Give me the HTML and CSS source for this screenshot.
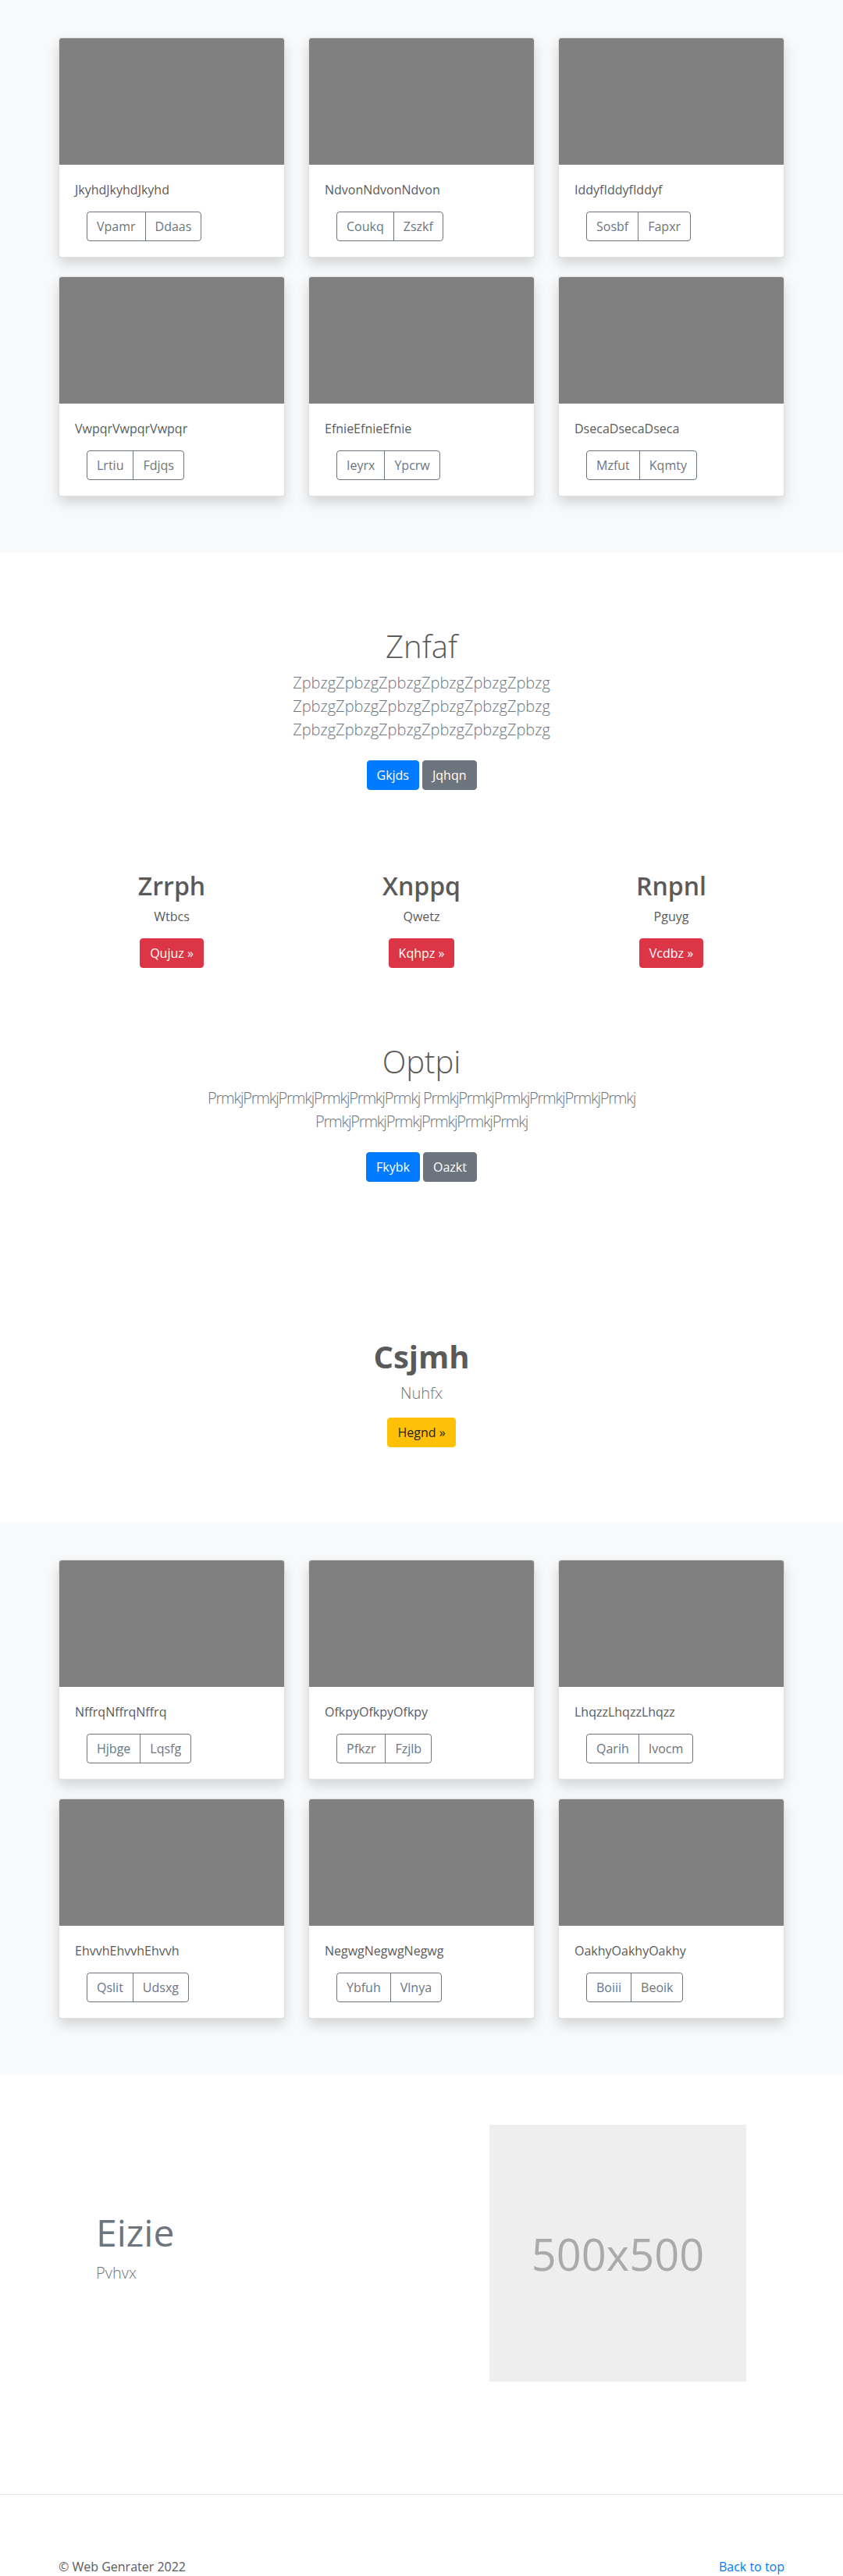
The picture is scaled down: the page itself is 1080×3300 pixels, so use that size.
FILE: index.html
```html
<!DOCTYPE html>
<html lang="en">
<head>
<meta charset="utf-8">
<title>Web Genrater</title>
<link rel="stylesheet" href="styles.css">
</head>
<body>

<section class="album">
  <div class="container card-grid">
    <div class="card"><div class="card-img"></div><div class="card-body"><p class="card-text">JkyhdJkyhdJkyhd</p><div class="btn-group"><button class="btn-outline">Vpamr</button><button class="btn-outline">Ddaas</button></div></div></div>
    <div class="card"><div class="card-img"></div><div class="card-body"><p class="card-text">NdvonNdvonNdvon</p><div class="btn-group"><button class="btn-outline">Coukq</button><button class="btn-outline">Zszkf</button></div></div></div>
    <div class="card"><div class="card-img"></div><div class="card-body"><p class="card-text">IddyfIddyfIddyf</p><div class="btn-group"><button class="btn-outline">Sosbf</button><button class="btn-outline">Fapxr</button></div></div></div>
    <div class="card"><div class="card-img"></div><div class="card-body"><p class="card-text">VwpqrVwpqrVwpqr</p><div class="btn-group"><button class="btn-outline">Lrtiu</button><button class="btn-outline">Fdjqs</button></div></div></div>
    <div class="card"><div class="card-img"></div><div class="card-body"><p class="card-text">EfnieEfnieEfnie</p><div class="btn-group"><button class="btn-outline">Ieyrx</button><button class="btn-outline">Ypcrw</button></div></div></div>
    <div class="card"><div class="card-img"></div><div class="card-body"><p class="card-text">DsecaDsecaDseca</p><div class="btn-group"><button class="btn-outline">Mzfut</button><button class="btn-outline">Kqmty</button></div></div></div>
  </div>
</section>

<section class="jumbo">
  <div class="jumbo-inner narrow">
    <h1 class="jumbo-title">Znfaf</h1>
    <p class="lead">ZpbzgZpbzgZpbzgZpbzgZpbzgZpbzg ZpbzgZpbzgZpbzgZpbzgZpbzgZpbzg ZpbzgZpbzgZpbzgZpbzgZpbzgZpbzg</p>
    <div class="btn-row">
      <a class="btn btn-primary" href="#">Gkjds</a>
      <a class="btn btn-secondary" href="#">Jqhqn</a>
    </div>
  </div>
</section>

<section class="marketing">
  <div class="marketing-row">
    <div class="marketing-col">
      <h2 class="marketing-title">Zrrph</h2>
      <p class="marketing-text">Wtbcs</p>
      <div class="marketing-action"><a class="btn btn-danger" href="#">Qujuz &raquo;</a></div>
    </div>
    <div class="marketing-col">
      <h2 class="marketing-title">Xnppq</h2>
      <p class="marketing-text">Qwetz</p>
      <div class="marketing-action"><a class="btn btn-danger" href="#">Kqhpz &raquo;</a></div>
    </div>
    <div class="marketing-col">
      <h2 class="marketing-title">Rnpnl</h2>
      <p class="marketing-text">Pguyg</p>
      <div class="marketing-action"><a class="btn btn-danger" href="#">Vcdbz &raquo;</a></div>
    </div>
  </div>
</section>

<section class="jumbo">
  <div class="jumbo-inner wide">
    <h1 class="jumbo-title">Optpi</h1>
    <p class="lead tight">PrmkjPrmkjPrmkjPrmkjPrmkjPrmkj PrmkjPrmkjPrmkjPrmkjPrmkjPrmkj PrmkjPrmkjPrmkjPrmkjPrmkjPrmkj</p>
    <div class="btn-row">
      <a class="btn btn-primary" href="#">Fkybk</a>
      <a class="btn btn-secondary" href="#">Oazkt</a>
    </div>
  </div>
</section>

<section class="cta">
  <h1 class="cta-title">Csjmh</h1>
  <p class="lead">Nuhfx</p>
  <div class="cta-action"><a class="btn btn-warning" href="#">Hegnd &raquo;</a></div>
</section>

<section class="album">
  <div class="container card-grid">
    <div class="card"><div class="card-img"></div><div class="card-body"><p class="card-text">NffrqNffrqNffrq</p><div class="btn-group"><button class="btn-outline">Hjbge</button><button class="btn-outline">Lqsfg</button></div></div></div>
    <div class="card"><div class="card-img"></div><div class="card-body"><p class="card-text">OfkpyOfkpyOfkpy</p><div class="btn-group"><button class="btn-outline">Pfkzr</button><button class="btn-outline">Fzjlb</button></div></div></div>
    <div class="card"><div class="card-img"></div><div class="card-body"><p class="card-text">LhqzzLhqzzLhqzz</p><div class="btn-group"><button class="btn-outline">Qarih</button><button class="btn-outline">Ivocm</button></div></div></div>
    <div class="card"><div class="card-img"></div><div class="card-body"><p class="card-text">EhvvhEhvvhEhvvh</p><div class="btn-group"><button class="btn-outline">Qslit</button><button class="btn-outline">Udsxg</button></div></div></div>
    <div class="card"><div class="card-img"></div><div class="card-body"><p class="card-text">NegwgNegwgNegwg</p><div class="btn-group"><button class="btn-outline">Ybfuh</button><button class="btn-outline">Vlnya</button></div></div></div>
    <div class="card"><div class="card-img"></div><div class="card-body"><p class="card-text">OakhyOakhyOakhy</p><div class="btn-group"><button class="btn-outline">Boiii</button><button class="btn-outline">Beoik</button></div></div></div>
  </div>
</section>

<section class="featurette">
  <div class="container featurette-row">
    <div class="featurette-text">
      <h2 class="featurette-heading">Eizie</h2>
      <p class="lead">Pvhvx</p>
    </div>
    <div class="placeholder"><span>500x500</span></div>
  </div>
</section>

<hr class="divider">

<footer class="container footer">
  <span>&copy; Web Genrater 2022</span>
  <a class="back-top" href="#">Back to top</a>
</footer>

</body>
</html>
```
FILE: styles.css
```css
* { box-sizing: border-box; }

html, body {
  margin: 0;
  padding: 0;
}

body {
  font-family: "Open Sans", "Noto Sans", "Liberation Sans", sans-serif;
  font-size: 16px;
  line-height: 1.5;
  color: #5a5a5a;
  background: #fff;
}

.container {
  width: 930px;
  margin: 0 auto;
}

/* ---------- Album ---------- */
.album {
  background: #f8f9fa;
  padding: 48px 0 72px;
}

.card-grid {
  display: grid;
  grid-template-columns: repeat(3, 290px);
  column-gap: 30px;
  row-gap: 24px;
}

.card {
  background: #fff;
  border: 1px solid rgba(0, 0, 0, 0.125);
  border-radius: 4px;
  box-shadow: 0 8px 16px rgba(0, 0, 0, 0.15);
  overflow: hidden;
}

.card-img {
  height: 162px;
  background: #808080;
}

.card-body {
  padding: 20px;
}

.card-text {
  margin: 0 0 16px;
  font-size: 16px;
  line-height: 24px;
}

.btn-group {
  display: inline-flex;
  margin-left: 15px;
}

.btn-outline {
  font-family: inherit;
  font-size: 16px;
  line-height: 24px;
  padding: 6px 12px;
  color: #6c757d;
  background: transparent;
  border: 1px solid #6c757d;
  border-radius: 0;
  margin: 0;
}

.btn-outline:first-child {
  border-radius: 4px 0 0 4px;
}

.btn-outline:last-child {
  border-radius: 0 4px 4px 0;
  margin-left: -1px;
}

/* ---------- Buttons ---------- */
.btn {
  display: inline-block;
  font-size: 16px;
  line-height: 24px;
  padding: 6px 12px;
  border: 1px solid transparent;
  border-radius: 4px;
  text-decoration: none;
  font-weight: 400;
}

.btn-primary { background: #007bff; border-color: #007bff; color: #fff; }
.btn-secondary { background: #6c757d; border-color: #6c757d; color: #fff; }
.btn-danger { background: #dc3545; border-color: #dc3545; color: #fff; }
.btn-warning { background: #ffc107; border-color: #ffc107; color: #212529; }

/* ---------- Jumbotron ---------- */
.jumbo {
  padding: 96px 0;
  text-align: center;
}

.jumbo-inner {
  margin: 0 auto;
}

.jumbo-inner.narrow { width: 450px; }
.jumbo-inner.wide { width: 690px; }

.jumbo-title {
  margin: 0 0 8px;
  font-size: 40px;
  font-weight: 300;
  line-height: 1.2;
}

.lead {
  margin: 0 0 16px;
  font-size: 20px;
  font-weight: 300;
  line-height: 30px;
  color: #6c757d;
}

.lead.tight {
  letter-spacing: -1.2px;
}

.btn-row {
  display: flex;
  justify-content: center;
  gap: 4px;
  padding: 8px 0;
}

/* ---------- Marketing ---------- */
.marketing-row {
  width: 960px;
  margin: 0 auto;
  display: grid;
  grid-template-columns: repeat(3, 1fr);
}

.marketing-col {
  padding: 0 15px;
  text-align: center;
}

.marketing-title {
  margin: 0 0 8px;
  font-size: 32px;
  font-weight: 600;
  line-height: 1.2;
}

.marketing-text {
  margin: 0 0 16px;
  line-height: 24px;
}

.marketing-action {
  display: flex;
  justify-content: center;
}

/* ---------- CTA ---------- */
.cta {
  padding: 96px 0;
  text-align: center;
}

.cta-title {
  margin: 0 0 8px;
  font-size: 40px;
  font-weight: 700;
  line-height: 1.2;
}

.cta-action {
  display: flex;
  justify-content: center;
}

/* ---------- Featurette ---------- */
.featurette {
  padding: 64px 0;
}

.featurette-row {
  display: flex;
  align-items: center;
}

.featurette-text {
  flex: 1;
  padding-left: 48px;
}

.featurette-heading {
  margin: 0 0 8px;
  font-size: 48px;
  font-weight: 400;
  line-height: 1.2;
  color: #6c757d;
}

.placeholder {
  width: 329px;
  height: 329px;
  margin-right: 49px;
  background: #eeeeee;
  color: #aaaaaa;
  font-size: 56px;
  display: flex;
  align-items: center;
  justify-content: center;
}

/* ---------- Footer ---------- */
.divider {
  margin: 80px 0 0;
  border: 0;
  border-top: 1px solid rgba(0, 0, 0, 0.1);
  height: 0;
}

.footer {
  margin-top: 80px;
  display: flex;
  justify-content: space-between;
  line-height: 24px;
}

.back-top {
  color: #007bff;
  text-decoration: none;
}
```
